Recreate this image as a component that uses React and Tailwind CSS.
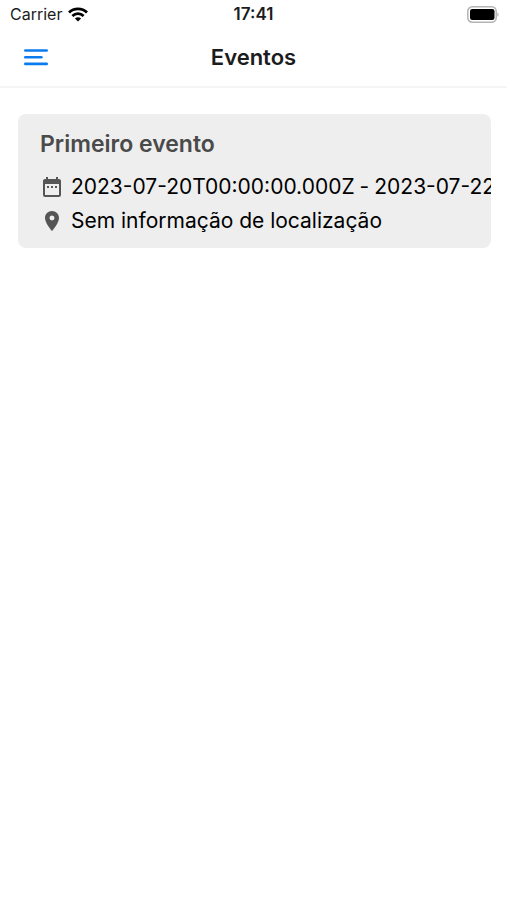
import { MdDateRange, MdLocationOn } from "react-icons/md";

const events = [
  {
    id: 1,
    name: "Primeiro evento",
    start: "2023-07-20T00:00:00.000Z",
    end: "2023-07-22T00:00:00.000Z",
    location: null,
  },
];

const StatusBar = () => {
  return (
    <div className="grid grid-cols-3 items-center h-7 px-2 text-[#1c1c1e]">
      <div className="flex items-center gap-1.5 pl-0.5">
        <span className="text-base">Carrier</span>
        <svg viewBox="0 0 20 15" className="w-5 h-[15px]" aria-hidden="true">
          <g fill="none" stroke="#000" strokeWidth="2.8">
            <path d="M1 5.4C6 .6 14 .6 19 5.4" />
            <path d="M4.4 8.9C7.6 5.9 12.4 5.9 15.6 8.9" />
          </g>
          <path d="M10 14.6 6.9 11.4C8.6 9.8 11.4 9.8 13.1 11.4Z" fill="#000" />
        </svg>
      </div>
      <span className="text-[17px] leading-7 font-semibold text-center">
        17:41
      </span>
      <svg
        viewBox="0 0 32 17"
        className="w-8 h-[17px] justify-self-end"
        aria-hidden="true"
      >
        <rect
          x="0.8"
          y="0.8"
          width="28.4"
          height="15.4"
          rx="4.5"
          fill="#fff"
          stroke="#b4b4b4"
          strokeWidth="1.5"
        />
        <rect x="3" y="3" width="24.5" height="11" rx="2.2" fill="#000" />
        <path d="M30.4 6.2c1.6.8 1.6 3.8 0 4.6z" fill="#b4b4b4" />
      </svg>
    </div>
  );
};

const Header = () => {
  return (
    <header className="grid grid-cols-[1fr_auto_1fr] items-center h-[60px] px-6 border-b-2 border-[#f5f5f5]">
      <button type="button" aria-label="Menu" className="justify-self-start">
        <svg viewBox="0 0 24 18" className="w-6 h-[18px]" aria-hidden="true">
          <g stroke="#0b7cf0" strokeWidth="2.6" strokeLinecap="round">
            <path d="M1.3 2.5H22.7" />
            <path d="M1.3 9.2H17.4" />
            <path d="M1.3 15.9H22.7" />
          </g>
        </svg>
      </button>
      <h1 className="text-[22px] font-semibold text-[#1c1c1e]">Eventos</h1>
    </header>
  );
};

const EventCard = ({ event }) => {
  return (
    <li className="bg-[#eeeeee] rounded-lg overflow-hidden px-[22px] pt-3 pb-[9px]">
      <h2 className="text-[23px] leading-9 font-semibold text-[#4a4a4a]">
        {event.name}
      </h2>
      <div className="flex items-center mt-[9px] gap-[5px] text-[21px] leading-8 text-black whitespace-nowrap">
        <div className="flex items-center gap-[7px]">
          <MdDateRange className="size-6 shrink-0 text-[#555555]" />
          <span>{event.start}</span>
        </div>
        <span>-</span>
        <span>{event.end}</span>
      </div>
      <div className="flex items-center gap-[7px] text-[21px] leading-9 text-black">
        <MdLocationOn className="size-6 shrink-0 text-[#555555]" />
        <span>{event.location || "Sem informação de localização"}</span>
      </div>
    </li>
  );
};

const App = () => {
  return (
    <div className="min-h-screen bg-white font-['Inter',sans-serif]">
      <StatusBar />
      <Header />
      <main className="pl-[18px] pr-4 pt-[26px]">
        <ul className="flex flex-col gap-4">
          {events.map((event) => (
            <EventCard key={event.id} event={event} />
          ))}
        </ul>
      </main>
    </div>
  );
};

export default App;
